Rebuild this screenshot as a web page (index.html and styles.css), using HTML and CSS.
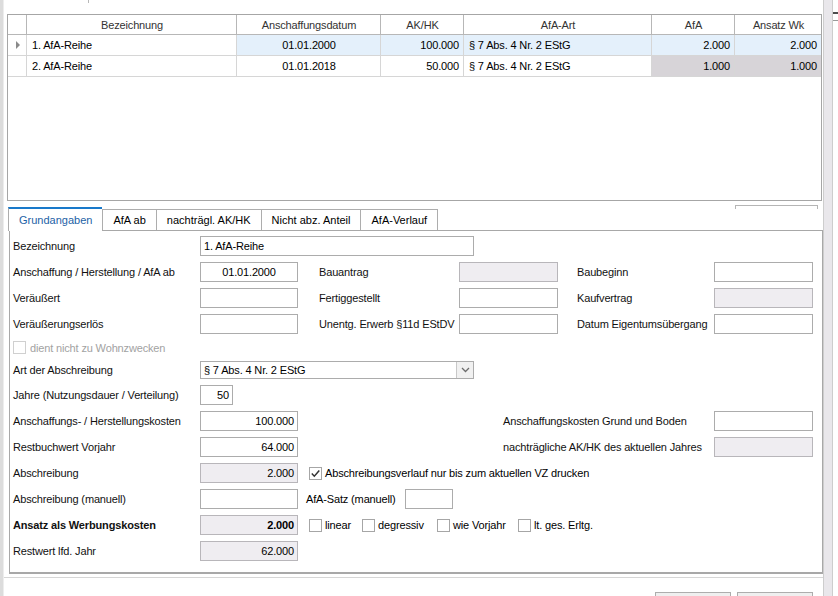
FILE: index.html
```html
<!DOCTYPE html>
<html lang="de">
<head>
<meta charset="utf-8">
<title>AfA-Reihen</title>
<link rel="stylesheet" href="styles.css">
</head>
<body>
<div class="app">
  <div class="edge-left"></div>
  <div class="main">
    <div class="topbar"><span class="tick"></span></div>

    <div class="grid-panel">
      <table class="grid">
        <colgroup>
          <col class="w-ind"><col class="w-bez"><col class="w-dat"><col class="w-ak"><col class="w-art"><col class="w-afa"><col class="w-wk">
        </colgroup>
        <thead>
          <tr><th></th><th>Bezeichnung</th><th>Anschaffungsdatum</th><th>AK/HK</th><th>AfA-Art</th><th>AfA</th><th>Ansatz Wk</th></tr>
        </thead>
        <tbody>
          <tr class="sel">
            <td class="ind"><span class="arrow"></span></td>
            <td class="focus">1. AfA-Reihe</td>
            <td class="c">01.01.2000</td>
            <td class="r">100.000</td>
            <td>§ 7 Abs. 4 Nr. 2 EStG</td>
            <td class="r">2.000</td>
            <td class="r">2.000</td>
          </tr>
          <tr>
            <td class="ind"></td>
            <td>2. AfA-Reihe</td>
            <td class="c">01.01.2018</td>
            <td class="r">50.000</td>
            <td>§ 7 Abs. 4 Nr. 2 EStG</td>
            <td class="r ro">1.000</td>
            <td class="r ro">1.000</td>
          </tr>
        </tbody>
      </table>
    </div>

    <div class="tabs">
      <div class="tab active">Grundangaben</div>
      <div class="tab">AfA ab</div>
      <div class="tab">nachträgl. AK/HK</div>
      <div class="tab">Nicht abz. Anteil</div>
      <div class="tab last">AfA-Verlauf</div>
      <div class="hidden-ctl"></div>
    </div>

    <div class="panel">
      <div class="form">
        <!-- row 1 -->
        <div class="lbl">Bezeichnung</div>
        <div class="in l wide">1. AfA-Reihe</div>

        <!-- row 2 -->
        <div class="lbl c1">Anschaffung / Herstellung / AfA ab</div>
        <div class="in c">01.01.2000</div>
        <div class="lbl c4">Bauantrag</div>
        <div class="in dis"></div>
        <div class="lbl c7">Baubeginn</div>
        <div class="in"></div>

        <!-- row 3 -->
        <div class="lbl c1">Veräußert</div>
        <div class="in"></div>
        <div class="lbl c4">Fertiggestellt</div>
        <div class="in"></div>
        <div class="lbl c7">Kaufvertrag</div>
        <div class="in dis"></div>

        <!-- row 4 -->
        <div class="lbl c1">Veräußerungserlös</div>
        <div class="in"></div>
        <div class="lbl c4">Unentg. Erwerb §11d EStDV</div>
        <div class="in"></div>
        <div class="lbl c7">Datum Eigentumsübergang</div>
        <div class="in"></div>

        <!-- row 5 -->
        <div class="cbline disabled">
          <span class="cb"></span><span>dient nicht zu Wohnzwecken</span>
        </div>

        <!-- row 6 -->
        <div class="lbl c1">Art der Abschreibung</div>
        <div class="select">
          <span class="select-text">§ 7 Abs. 4 Nr. 2 EStG</span>
          <span class="drop"><svg width="9" height="6" viewBox="0 0 9 6"><polyline points="1,1 4.5,4.5 8,1" fill="none" stroke="#6d6d6d" stroke-width="1.3"/></svg></span>
        </div>

        <!-- row 7 -->
        <div class="lbl c1">Jahre (Nutzungsdauer / Verteilung)</div>
        <div class="in short">50</div>

        <!-- row 8 -->
        <div class="lbl c1">Anschaffungs- / Herstellungskosten</div>
        <div class="in">100.000</div>
        <div class="lbl far">Anschaffungskosten Grund und Boden</div>
        <div class="in"></div>

        <!-- row 9 -->
        <div class="lbl c1">Restbuchwert Vorjahr</div>
        <div class="in">64.000</div>
        <div class="lbl far">nachträgliche AK/HK des aktuellen Jahres</div>
        <div class="in dis"></div>

        <!-- row 10 -->
        <div class="lbl c1">Abschreibung</div>
        <div class="in dis">2.000</div>
        <div class="cbline rest">
          <span class="cb"><svg width="11" height="11" viewBox="0 0 11 11"><polyline points="1.8,5.6 4.3,8.2 9.3,2.5" fill="none" stroke="#333" stroke-width="1.5"/></svg></span>
          <span>Abschreibungsverlauf nur bis zum aktuellen VZ drucken</span>
        </div>

        <!-- row 11 -->
        <div class="lbl c1">Abschreibung (manuell)</div>
        <div class="in"></div>
        <div class="inline">
          <span class="inline-lbl">AfA-Satz (manuell)</span>
          <span class="in satz"></span>
        </div>

        <!-- row 12 -->
        <div class="lbl c1 bold">Ansatz als Werbungskosten</div>
        <div class="in dis bold">2.000</div>
        <div class="cbgroup">
          <span class="cbitem w1"><span class="cb"></span><span>linear</span></span>
          <span class="cbitem w2"><span class="cb"></span><span>degressiv</span></span>
          <span class="cbitem w3"><span class="cb"></span><span>wie Vorjahr</span></span>
          <span class="cbitem"><span class="cb"></span><span>lt. ges. Erltg.</span></span>
        </div>

        <!-- row 13 -->
        <div class="lbl c1">Restwert lfd. Jahr</div>
        <div class="in dis">62.000</div>
      </div>
    </div>

    <div class="separator"></div>

    <div class="buttons">
      <div class="btn"></div>
      <div class="btn"></div>
    </div>
  </div>
  <div class="edge-right">
    <div class="band"></div>
    <div class="grip"></div>
  </div>
</div>
</body>
</html>
```

FILE: styles.css
```css
* { box-sizing: border-box; }

html, body {
  margin: 0;
  padding: 0;
  background: #fff;
}

body {
  font-family: "Liberation Sans", Arial, sans-serif;
  font-size: 11px;
  letter-spacing: -0.15px;
  color: #000;
}

.app {
  display: flex;
  width: 838px;
  height: 596px;
  overflow: hidden;
  background: #fff;
}

.edge-left {
  flex: none;
  width: 4px;
  background: #dcdcdc;
  border-right: 1px solid #ededed;
}

.main {
  flex: none;
  width: 819px;
  display: flex;
  flex-direction: column;
}

.edge-right {
  flex: none;
  width: 15px;
  display: flex;
}

.band {
  width: 10px;
  background: #e9e7eb;
  border-left: 1px solid #cdcdcd;
  border-right: 1px solid #cdcdcd;
}

.grip {
  width: 5px;
  height: 9px;
  margin-top: 12px;
  border-top: 2px solid #4d4d4d;
  border-bottom: 1px solid #9a9a9a;
}

/* top */
.topbar {
  flex: none;
  height: 14px;
}

.tick {
  display: block;
  width: 1px;
  height: 3px;
  margin-left: 84px;
  background: #b8b8b8;
}

/* grid */
.grid-panel {
  flex: none;
  margin-left: 3px;
  width: 815px;
  height: 187px;
  border: 1px solid #a6a6a6;
  background: #fff;
}

.grid {
  border-collapse: separate;
  border-spacing: 0;
  table-layout: fixed;
  width: 813px;
}

.w-ind { width: 19px; }
.w-bez { width: 210px; }
.w-dat { width: 144px; }
.w-ak  { width: 83px; }
.w-art { width: 188px; }
.w-afa { width: 83px; }
.w-wk  { width: 86px; }

.grid th,
.grid td {
  height: 21px;
  padding: 0 4px 0 5px;
  border-right: 1px solid #d6d6d6;
  border-bottom: 1px solid #d6d6d6;
  white-space: nowrap;
  overflow: hidden;
  font-weight: normal;
  text-align: left;
}

.grid th {
  height: 20px;
  text-align: center;
  color: #333;
  border-right-color: #b7b7b7;
  border-bottom-color: #b7b7b7;
}

.grid th:last-child,
.grid td:last-child {
  border-right: none;
}

.grid td.c { text-align: center; }
.grid td.r { text-align: right; }

.grid td.ind {
  padding: 0 0 0 8px;
}

.arrow {
  display: block;
  width: 0;
  height: 0;
  border-left: 4px solid #8a8a8a;
  border-top: 4px solid transparent;
  border-bottom: 4px solid transparent;
}

.grid tr.sel td { background: #e4f0fb; }
.grid tr.sel td.ind,
.grid tr.sel td.focus { background: #fff; }
.grid td.ro { background: #d7d4d8; }

/* tabs */
.tabs {
  flex: none;
  display: flex;
  align-items: flex-end;
  height: 29px;
  margin-left: 4px;
  width: 814px;
}

.tab {
  height: 21px;
  padding: 0 10px;
  line-height: 20px;
  letter-spacing: 0;
  border-top: 1px solid #adadad;
  border-left: 1px solid #adadad;
  background: #fff;
  white-space: nowrap;
}

.tab.last {
  border-right: 1px solid #adadad;
}

.tab.active {
  position: relative;
  z-index: 1;
  height: 24px;
  margin-bottom: -1px;
  line-height: 22px;
  border-top: 2px solid #1979ca;
  color: #1d62a6;
}

.hidden-ctl {
  align-self: flex-start;
  margin: 4px 4px 0 auto;
  width: 83px;
  height: 4px;
  border: 1px solid #b5b5b5;
  border-bottom: none;
}

/* panel */
.panel {
  flex: none;
  margin-left: 5px;
  width: 814px;
  height: 344px;
  border: 1px solid #a8a8a8;
  border-bottom: 2px solid #a8a8a8;
  padding: 5px 0 0 3px;
}

.form {
  display: grid;
  grid-template-columns: 187px 98px 21px 140px 99px 19px 137px 99px;
  grid-template-rows: 20px 20px 20px 20px 15px 18px repeat(7, 20px);
  row-gap: 6px;
}

.lbl {
  align-self: center;
  white-space: nowrap;
  color: #111;
}

.c1 { grid-column: 1; }
.c4 { grid-column: 4; }
.c7 { grid-column: 7; }

.far {
  grid-column: 4 / 8;
  padding-left: 184px;
}

.bold { font-weight: bold; }

.in {
  height: 20px;
  border: 1px solid #acacac;
  background: #fff;
  padding: 0 3px;
  line-height: 18px;
  text-align: right;
  white-space: nowrap;
  overflow: hidden;
}

.in.dis {
  background: #efedf1;
  border-color: #b8b6ba;
}

.in.c { text-align: center; }
.in.l { text-align: left; }

.in.wide {
  grid-column: 2 / 6;
  justify-self: start;
  width: 274px;
}

.in.short {
  justify-self: start;
  width: 33px;
}

.select {
  grid-column: 2 / 6;
  justify-self: start;
  width: 274px;
  height: 18px;
  display: flex;
  border: 1px solid #acacac;
  background: #fff;
}

.select-text {
  flex: 1;
  padding-left: 3px;
  line-height: 16px;
}

.drop {
  width: 17px;
  display: flex;
  align-items: center;
  justify-content: center;
  border-left: 1px solid #c8c8c8;
  background: #f1f1f1;
}

/* checkboxes */
.cb {
  flex: none;
  width: 13px;
  height: 13px;
  border: 1px solid #a6a6a6;
  background: #fff;
  display: flex;
  align-items: center;
  justify-content: center;
}

.cbline {
  grid-column: 1 / -1;
  display: flex;
  align-items: center;
  gap: 4px;
  white-space: nowrap;
}

.cbline.disabled { color: #a2a2a2; }
.cbline.disabled .cb { border-color: #d0d0d0; }

.cbline.rest {
  grid-column: 3 / -1;
  padding-left: 11px;
  gap: 3px;
}

.inline {
  grid-column: 3 / -1;
  display: flex;
  align-items: center;
  padding-left: 8px;
}

.inline-lbl {
  width: 99px;
  white-space: nowrap;
}

.in.satz {
  width: 48px;
}

.cbgroup {
  grid-column: 3 / -1;
  display: flex;
  align-items: center;
  padding-left: 11px;
}

.cbitem {
  display: flex;
  align-items: center;
  gap: 3px;
  white-space: nowrap;
}

.cbitem.w1 { width: 53px; }
.cbitem.w2 { width: 75px; }
.cbitem.w3 { width: 81px; }

/* footer */
.separator {
  flex: none;
  height: 1px;
  margin-top: 3px;
  background: #d6d6d6;
}

.buttons {
  flex: none;
  display: flex;
  justify-content: flex-end;
  gap: 6px;
  margin-top: 14px;
  padding-right: 10px;
}

.btn {
  width: 76px;
  height: 23px;
  border: 1px solid #adadad;
  background: #efefef;
}
```
